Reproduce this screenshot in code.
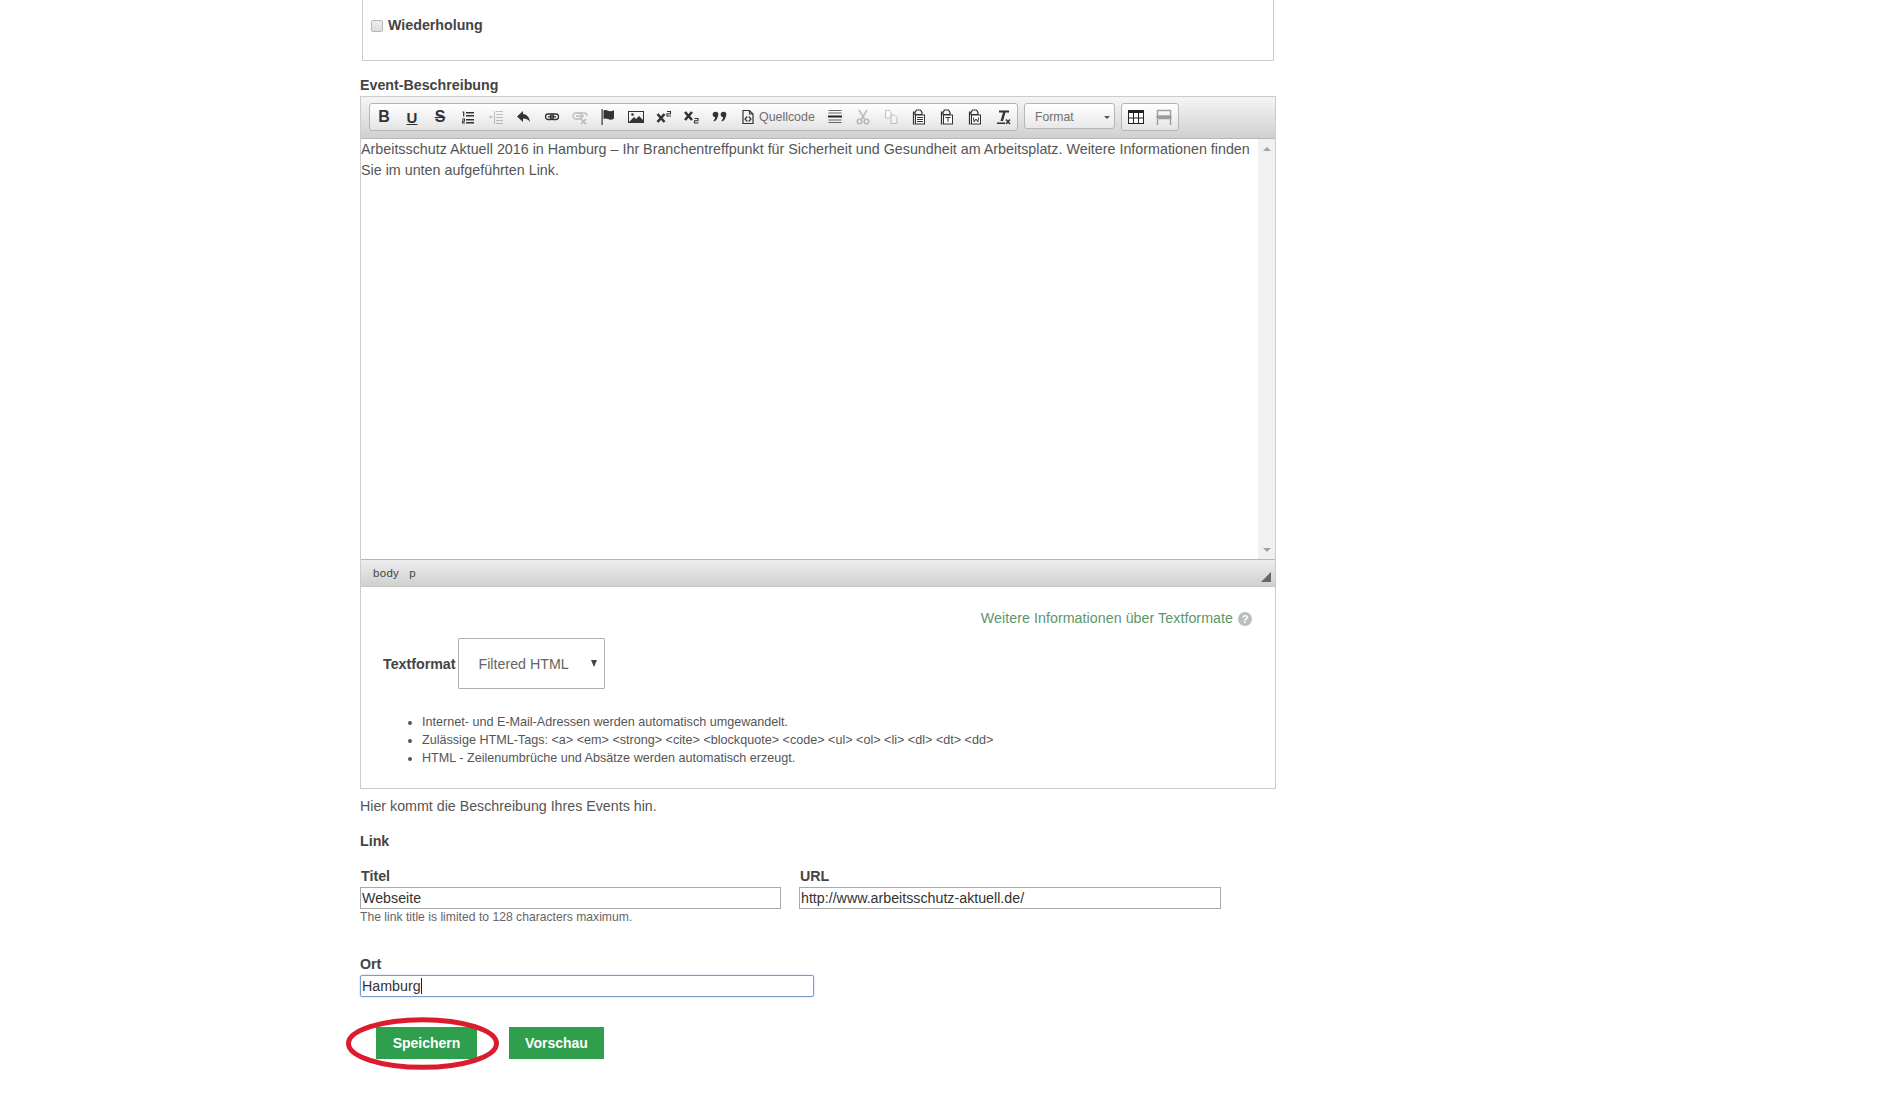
<div class="page">
  <div class="fieldset">
    <label class="check"><span class="box"></span><span>Wiederholung</span></label>
  </div>

  <div class="label desc-label">Event-Beschreibung</div>
  <div class="outer">
    <div class="toolbar">
      <div class="group">
        <span class="btn"><b class="letter">B</b></span>
        <span class="btn"><b class="letter u">U</b></span>
        <span class="btn"><b class="letter s">S</b></span>
        <span class="btn"><svg viewBox="0 0 16 16" class="ic"><path d="M6 3h8v1.400H6zM6 6h8v1.400H6zM6 10h8v1.400H6zM6 13h8v1.400H6z" fill="#333"/><path d="M2.500 2.500h1.800v5H3.100V3.600h-.6zM2 9.500h3v3H3.200v1h1.800v1H2v-3h1.900v-1H2z" fill="#333"/></svg></span>
        <span class="btn off"><svg viewBox="0 0 16 16" class="ic"><path d="M8 2h7v1H8zM8 5h7v1H8zM8 8h7v1H8zM8 11h7v1H8zM8 14h7v1H8z" fill="#555"/><path d="M6 2h1v13H6zM1 8l2-2v1.500h2v1H3V10z" fill="#555"/></svg></span>
        <span class="btn"><svg viewBox="0 0 16 16" class="ic"><path d="M7 2 1 7.500 7 13V9.500c3 0 5 .8 7 3.500-.4-4.500-3-7.500-7-8z" fill="#333"/></svg></span>
        <span class="btn"><svg viewBox="0 0 16 16" class="ic"><rect x="1.500" y="5" width="8" height="5.500" rx="2.700" fill="none" stroke="#333" stroke-width="1.300"/><rect x="6.500" y="5" width="8" height="5.500" rx="2.700" fill="none" stroke="#333" stroke-width="1.300"/><path d="M4 7.750h8" stroke="#333" stroke-width="1.300"/></svg></span>
        <span class="btn off"><svg viewBox="0 0 16 16" class="ic"><rect x="1" y="4" width="9" height="6" rx="3" fill="none" stroke="#555" stroke-width="1.300"/><path d="M6 4h6a3 3 0 0 1 3 3M4 7h8" fill="none" stroke="#555" stroke-width="1.300"/><path d="m9 10 5 5m0-5-5 5" stroke="#555" stroke-width="1.600"/></svg></span>
        <span class="btn"><svg viewBox="0 0 16 16" class="ic"><path d="M1.500 0h1.200v16H1.500z" fill="#333"/><path d="M3.500 1.500c3-1.500 4.500 1 7 .7 1.500-.2 3-.7 3.500-1v8.300c-2 1.400-4 1.500-6 .5-2-.8-3-.8-4.500 0z" fill="#333"/></svg></span>
        <span class="btn"><svg viewBox="0 0 16 16" class="ic"><rect x=".5" y="2.500" width="15" height="11" fill="none" stroke="#333"/><path d="M1 13 6 8l2 2 3-3 4 4v2z" fill="#333"/><circle cx="4.500" cy="5.500" r="1.300" fill="#333"/></svg></span>
        <span class="btn"><svg viewBox="0 0 16 16" class="ic"><path d="m1.500 5 7 8M8.500 5l-7 8" stroke="#333" stroke-width="2.600"/><path d="M11 2.500h3.500v2.200H11v2.300h4" fill="none" stroke="#333" stroke-width="1.100"/></svg></span>
        <span class="btn"><svg viewBox="0 0 16 16" class="ic"><path d="m1 3 7 8M8 3l-7 8" stroke="#333" stroke-width="2.600"/><path d="M10.500 9.500H14v2.200h-3.500V14h4" fill="none" stroke="#333" stroke-width="1.100"/></svg></span>
        <span class="btn"><svg viewBox="0 0 16 16" class="ic"><circle cx="3.500" cy="5.500" r="2.800" fill="#333"/><path d="M5.800 5.500c.3 3.500-1.300 6-3.800 7l-.5-1c1-.8 1.500-2 1.500-3z" fill="#333"/><circle cx="11.500" cy="5.500" r="2.800" fill="#333"/><path d="M13.800 5.500c.3 3.500-1.300 6-3.800 7l-.5-1c1-.8 1.500-2 1.500-3z" fill="#333"/></svg></span>
        <span class="btn source"><svg viewBox="0 0 16 16" class="ic"><path d="M3 1.500h6.500L13 5v9.500H3zM9.500 1.500V5H13" fill="none" stroke="#333" stroke-width="1.200"/><path d="M7.300 7.500 5 10l2.300 2.500M8.700 7.500 11 10l-2.300 2.500" fill="none" stroke="#333" stroke-width="1.200"/></svg><span class="source-text">Quellcode</span></span>
        <span class="btn"><svg viewBox="0 0 16 16" class="ic"><path d="M1.500 1h13v1h-13zM1.500 3.500h13v1h-13zM1.500 10.500h13v1h-13zM1.500 13h13v1h-13z" fill="#666"/><path d="M1 6.500h14v2H1z" fill="#222"/></svg></span>
        <span class="btn off"><svg viewBox="0 0 16 16" class="ic"><path d="M4 1l5.500 9M12 1l-5.500 9" stroke="#555" stroke-width="1.600"/><circle cx="4.500" cy="12.500" r="2.300" fill="none" stroke="#555" stroke-width="1.500"/><circle cx="11.500" cy="12.500" r="2.300" fill="none" stroke="#555" stroke-width="1.500"/></svg></span>
        <span class="btn off"><svg viewBox="0 0 16 16" class="ic"><path d="M2.500 1.500H7L8 3v6H2.500zM8 6h3.500L14 8.500v6H8z" fill="#fff" stroke="#666"/></svg></span>
        <span class="btn"><svg viewBox="0 0 16 16" class="ic"><path d="M3.500 3H2.500v12h1M5.500 1h4l1.500 2.500v2H4v-2z" fill="none" stroke="#333" stroke-width="1.200"/><rect x="4.500" y="6" width="9" height="9" fill="#fff" stroke="#333"/><path d="M6 8.500h6M6 10.500h6M6 12.500h6" stroke="#333"/></svg></span>
        <span class="btn"><svg viewBox="0 0 16 16" class="ic"><path d="M3.500 3H2.500v12h1M5.500 1h4l1.500 2.500v2H4v-2z" fill="none" stroke="#333" stroke-width="1.200"/><rect x="4.500" y="6" width="9" height="9" fill="#fff" stroke="#333"/><path d="M6.500 8.500h5M9 8.500V13" stroke="#333"/></svg></span>
        <span class="btn"><svg viewBox="0 0 16 16" class="ic"><path d="M3.500 3H2.500v12h1M5.500 1h4l1.500 2.500v2H4v-2z" fill="none" stroke="#333" stroke-width="1.200"/><rect x="4.500" y="6" width="9" height="9" fill="#fff" stroke="#333"/><path d="M6.300 8.500l.9 4.500 1.800-3 1.800 3 .9-4.500" fill="none" stroke="#333"/></svg></span>
        <span class="btn"><svg viewBox="0 0 16 16" class="ic"><path d="M4 1.500h10v2h-3.500L8 12H5.500L8 3.500H4z" fill="#333"/><path d="M2 13.500h8V15H2z" fill="#333"/><path d="m11 10.500 4 4.500m0-4.500-4 4.500" stroke="#333" stroke-width="1.500"/></svg></span>
      </div>
      <div class="group combo"><span>Format</span><i class="caret"></i></div>
      <div class="group">
        <span class="btn"><svg viewBox="0 0 16 16" class="ic"><rect x=".5" y="1.500" width="15" height="13" fill="#fff" stroke="#222"/><path d="M0 1h16v3H0z" fill="#222"/><path d="M5.500 4v10M10.500 4v10M1 9h14" stroke="#222"/></svg></span>
        <span class="btn off2"><svg viewBox="0 0 16 16" class="ic"><path d="M1.500 1.500h13v5.500h-13zM0 8h16M1.500 9.500h13V16M1.500 9.500V16" fill="none" stroke="#666" stroke-width="1.400"/></svg></span>
      </div>
    </div>

    <div class="editor">
      <div class="content">Arbeitsschutz Aktuell 2016 in Hamburg – Ihr Branchentreffpunkt für Sicherheit und Gesundheit am Arbeitsplatz. Weitere Informationen finden Sie im unten aufgeführten Link.</div>
      <div class="scroll"><i class="up"></i><i class="down"></i></div>
    </div>

    <div class="path">
      <span>body</span><span>p</span>
      <svg class="resize" viewBox="0 0 10 10"><path d="M10 0v10H0z" fill="#666"/></svg>
    </div>

    <div class="format">
      <div class="tips"><span class="tiplink">Weitere Informationen über Textformate</span><span class="q">?</span></div>
      <div class="fmtrow">
        <span class="fmtlabel">Textformat</span>
        <div class="select"><span>Filtered HTML</span><i class="sel-arrow"></i></div>
      </div>
      <ul>
        <li>Internet- und E-Mail-Adressen werden automatisch umgewandelt.</li>
        <li>Zulässige HTML-Tags: &lt;a&gt; &lt;em&gt; &lt;strong&gt; &lt;cite&gt; &lt;blockquote&gt; &lt;code&gt; &lt;ul&gt; &lt;ol&gt; &lt;li&gt; &lt;dl&gt; &lt;dt&gt; &lt;dd&gt;</li>
        <li>HTML - Zeilenumbrüche und Absätze werden automatisch erzeugt.</li>
      </ul>
    </div>
  </div>

  <p class="hint">Hier kommt die Beschreibung Ihres Events hin.</p>
  <div class="label link">Link</div>

  <div class="linkrow">
    <div class="col">
      <div class="label small">Titel</div>
      <div class="input w1">Webseite</div>
      <div class="help">The link title is limited to 128 characters maximum.</div>
    </div>
    <div class="col">
      <div class="label small">URL</div>
      <div class="input w1">http://www.arbeitsschutz-aktuell.de/</div>
    </div>
  </div>

  <div class="label ort">Ort</div>
  <div class="input focus">Hamburg<i class="cursor"></i></div>

  <div class="actions">
    <span class="button">Speichern</span>
    <span class="button two">Vorschau</span>
    <svg class="ring" viewBox="0 0 153 53"><ellipse cx="76.500" cy="26.500" rx="74" ry="23.800" fill="none" stroke="#dc1c2e" stroke-width="5"/></svg>
  </div>
</div>

<style>
  :global(body) { margin: 0; background: #fff; }
  .page {
    width: 916px;
    margin-left: 360px;
    height: 1105px;
    font-family: "Liberation Sans", Arial, sans-serif;
    font-size: 14.24px;
    color: #555;
  }
  .fieldset {
    box-sizing: border-box;
    height: 61px;
    margin: 0 2px 0 2px;
    border: 1px solid #ccc;
    border-top: 0;
    padding: 17px 0 0 8px;
  }
  .check { display: flex; align-items: center; gap: 5px; font-weight: bold; color: #444; line-height: 17px; }
  .box {
    width: 10px; height: 10px; border: 1px solid #b5b5b5; border-radius: 2px;
    background: linear-gradient(#eee, #ddd);
  }
  .label { font-weight: bold; color: #444; line-height: 17px; }
  .desc-label { margin-top: 16px; height: 19px; }
  .outer { border: 1px solid #ccc; }
  .toolbar {
    box-sizing: border-box; height: 42px;
    background: linear-gradient(#f5f5f5, #cfd1cf);
    padding: 6px 0 0 8px;
    display: flex; gap: 5px;
    border-bottom: 1px solid #b6b6b6;
    align-items: flex-start;
  }
  .group {
    display: flex; height: 26px; border: 1px solid #b6b6b6; border-radius: 3px;
    background: linear-gradient(#fff, #e4e4e4);
    margin-right: 1px;
  }
  .btn { width: 28px; height: 26px; display: flex; align-items: center; justify-content: center; flex: none; }
  .btn.off svg { opacity: .35; }
  .btn.off2 svg { opacity: .6; }
  .ic { width: 16px; height: 16px; display: block; }
  .letter { font-size: 16px; color: #333; font-family: "Liberation Sans", sans-serif; }
  .letter.u { text-decoration: underline; font-size: 15px; }
  .letter.s { text-decoration: line-through; }
  .btn.source { width: 87px; justify-content: flex-start; padding-left: 6px; box-sizing: border-box; gap: 3px; }
  .source-text { font-size: 12.4px; color: #6f6f6f; }
  .combo {
    box-sizing: border-box; width: 91px; padding: 2px 4px 0 10px; align-items: center;
    justify-content: space-between; font-size: 12.2px; color: #6f6f6f;
    background: linear-gradient(#fff, #e8e8e8);
  }
  .caret { width: 0; height: 0; border: 3px solid transparent; border-top-color: #555; margin-top: 3px; }
  .editor { display: flex; height: 420px; background: #fff; }
  .content { flex: 1; color: #555; line-height: 21px; min-width: 0; font-size: 14.31px; }
  .scroll { width: 17px; background: #f1f1f1; position: relative; }
  .scroll i { position: absolute; left: 5px; width: 0; height: 0; border: 4px solid transparent; }
  .up { top: 4px; border-bottom-color: #a3a3a3 !important; }
  .down { bottom: 3px; border-top-color: #a3a3a3 !important; }
  .path {
    box-sizing: border-box; height: 28px; position: relative;
    border-top: 1px solid #b6b6b6;
    border-bottom: 1px solid #c4c4c4;
    background: linear-gradient(#ededed, #cfd1cf);
    display: flex; align-items: center; gap: 10px; padding-left: 12px;
    font-size: 11.500px; color: #444; letter-spacing: .3px;
  }
  .resize { position: absolute; right: 4px; bottom: 4px; width: 10px; height: 10px; }
  .format { height: 201px; box-sizing: border-box; padding-top: 23px; }
  .tips { display: flex; justify-content: flex-end; align-items: center; gap: 5px; padding-right: 23px; line-height: 17px; }
  .tiplink { color: #5d9668; letter-spacing: .05px; }
  .q {
    width: 14px; height: 14px; border-radius: 50%; background: #bdbdbd; color: #fff;
    font-size: 11px; font-weight: bold; text-align: center; line-height: 14px;
  }
  .fmtrow { display: flex; align-items: center; gap: 2px; margin: 11px 0 0 22px; }
  .fmtlabel { font-weight: bold; color: #444; }
  .select {
    box-sizing: border-box; width: 147px; height: 51px; border: 1px solid #b0b0b0;
    border-radius: 1px; display: flex; align-items: center; justify-content: space-between;
    padding: 0 7px 0 20px; color: #666;
  }
  .sel-arrow { width: 0; height: 0; border-style: solid; border-width: 7px 3px 0; border-color: #444 transparent transparent; }
  ul { margin: 24px 0 0; padding: 0 0 0 61px; font-size: 12.600px; line-height: 18px; color: #555; }
  .hint { margin: 0; padding-top: 9px; line-height: 17px; height: 17px; }
  .link { margin-top: 18px; }
  .linkrow { display: flex; gap: 18px; margin-top: 18px; }
  .col { width: 421px; }
  .small { line-height: 17px; padding-left: 1px; }
  .input {
    box-sizing: border-box; height: 22px; border: 1px solid #a9a9a9; padding-left: 1px;
    line-height: 20px; color: #333; margin-top: 2px; position: relative;
  }
  .w1 { width: 421px; }
  .col + .col .w1 { width: 422px; }
  .help { font-size: 12.160px; line-height: 15px; color: #666; margin-top: 1px; }
  .ort { margin-top: 31px; }
  .focus { width: 454px; border: 1px solid #7a9cd3; border-radius: 2px; box-shadow: 0 0 2px #a9c3ea; }
  .cursor { display: inline-block; width: 1px; height: 16px; background: #222; vertical-align: -3px; }
  .actions { display: flex; gap: 32px; margin: 30px 0 0 16px; position: relative; }
  .button {
    background: #2f9e4d; color: #fff; font-weight: bold; font-size: 14px; height: 32px; line-height: 32px;
    width: 101px; text-align: center; flex: none;
  }
  .button.two { width: 95px; }
  .ring { position: absolute; left: -30px; top: -10px; width: 153px; height: 53px; }
</style>
